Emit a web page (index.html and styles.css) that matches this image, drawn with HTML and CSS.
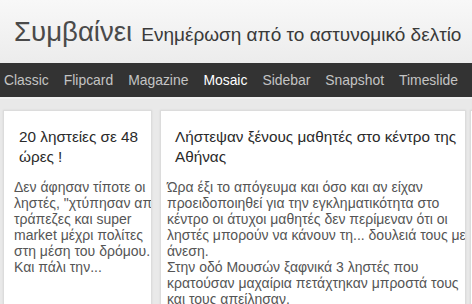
FILE: index.html
```html
<!DOCTYPE html>
<html lang="el">
<head>
<meta charset="utf-8">
<link rel="stylesheet" href="styles.css">
</head>
<body>
<header class="header">
  <h1 class="title">Συμβαίνει</h1>
  <span class="subtitle">Ενημέρωση από το αστυνομικό δελτίο</span>
</header>
<nav class="nav">
  <a class="nav-item">Classic</a>
  <a class="nav-item">Flipcard</a>
  <a class="nav-item">Magazine</a>
  <a class="nav-item active">Mosaic</a>
  <a class="nav-item">Sidebar</a>
  <a class="nav-item">Snapshot</a>
  <a class="nav-item">Timeslide</a>
</nav>
<main class="mosaic">
  <article class="card card-small">
    <h2 class="card-title">20 ληστείες σε 48<br>ώρες !</h2>
    <p class="card-text">Δεν άφησαν τίποτε οι<br>ληστές, "χτύπησαν από<br>τράπεζες και super<br>market μέχρι πολίτες<br>στη μέση του δρόμου.<br>Και πάλι την...</p>
  </article>
  <article class="card card-wide">
    <h2 class="card-title">Λήστεψαν ξένους μαθητές στο κέντρο της<br>Αθήνας</h2>
    <p class="card-text">Ώρα έξι το απόγευμα και όσο και αν είχαν<br>προειδοποιηθεί για την εγκληματικότητα στο<br>κέντρο οι άτυχοι μαθητές δεν περίμεναν ότι οι<br>ληστές μπορούν να κάνουν τη... δουλειά τους με<br>άνεση.<br>Στην οδό Μουσών ξαφνικά 3 ληστές που<br>κρατούσαν μαχαίρια πετάχτηκαν μπροστά τους<br>και τους απείλησαν.</p>
  </article>
  <article class="card card-next"></article>
</main>
</body>
</html>
```
FILE: styles.css
```css
html, body {
  margin: 0;
  padding: 0;
}
body {
  width: 472px;
  height: 304px;
  overflow: hidden;
  background: #e9e9e9;
  font-family: "Liberation Sans", Arial, sans-serif;
}
.header {
  height: 63px;
  background: linear-gradient(#f8f8f8, #ececec);
  display: flex;
  align-items: baseline;
  padding: 0 0 0 14px;
  box-sizing: border-box;
  white-space: nowrap;
}
.title {
  margin: 0;
  font-weight: normal;
  font-size: 27.6px;
  line-height: 64px;
  color: #4a4a4a;
  margin-right: 9px;
}
.subtitle {
  font-size: 19px;
  color: #3a3a3a;
}
.nav {
  height: 34px;
  background: #333;
  display: flex;
  align-items: center;
  gap: 15px;
  padding-left: 4px;
  border-bottom: 2px solid #f0f0f0;
  white-space: nowrap;
}
.nav-item {
  font-size: 13.9px;
  color: #c4c4c4;
}
.nav-item.active {
  color: #fff;
}
.mosaic {
  display: flex;
  gap: 8px;
  padding: 11px 0 0 3px;
  align-items: flex-start;
}
.card {
  flex: none;
  background: #fff;
  border: 1px solid #dcdcdc;
  box-shadow: 0 0 2px rgba(0,0,0,0.08);
  overflow: hidden;
  height: 220px;
  box-sizing: border-box;
}
.card-small {
  width: 149px;
  padding: 16px 0 0 10px;
}
.card-wide {
  width: 306px;
  padding: 16px 0 0 6px;
}
.card-next {
  width: 100px;
  margin-left: -4px;
}
.card-title {
  margin: 0 0 12px 5px;
  font-weight: normal;
  font-size: 15.3px;
  line-height: 20px;
  color: #2a2a2a;
  white-space: nowrap;
}
.card-wide .card-title {
  margin-left: 8px;
}
.card-text {
  margin: 0;
  font-size: 14px;
  line-height: 16px;
  color: #555;
  white-space: nowrap;
}
```
